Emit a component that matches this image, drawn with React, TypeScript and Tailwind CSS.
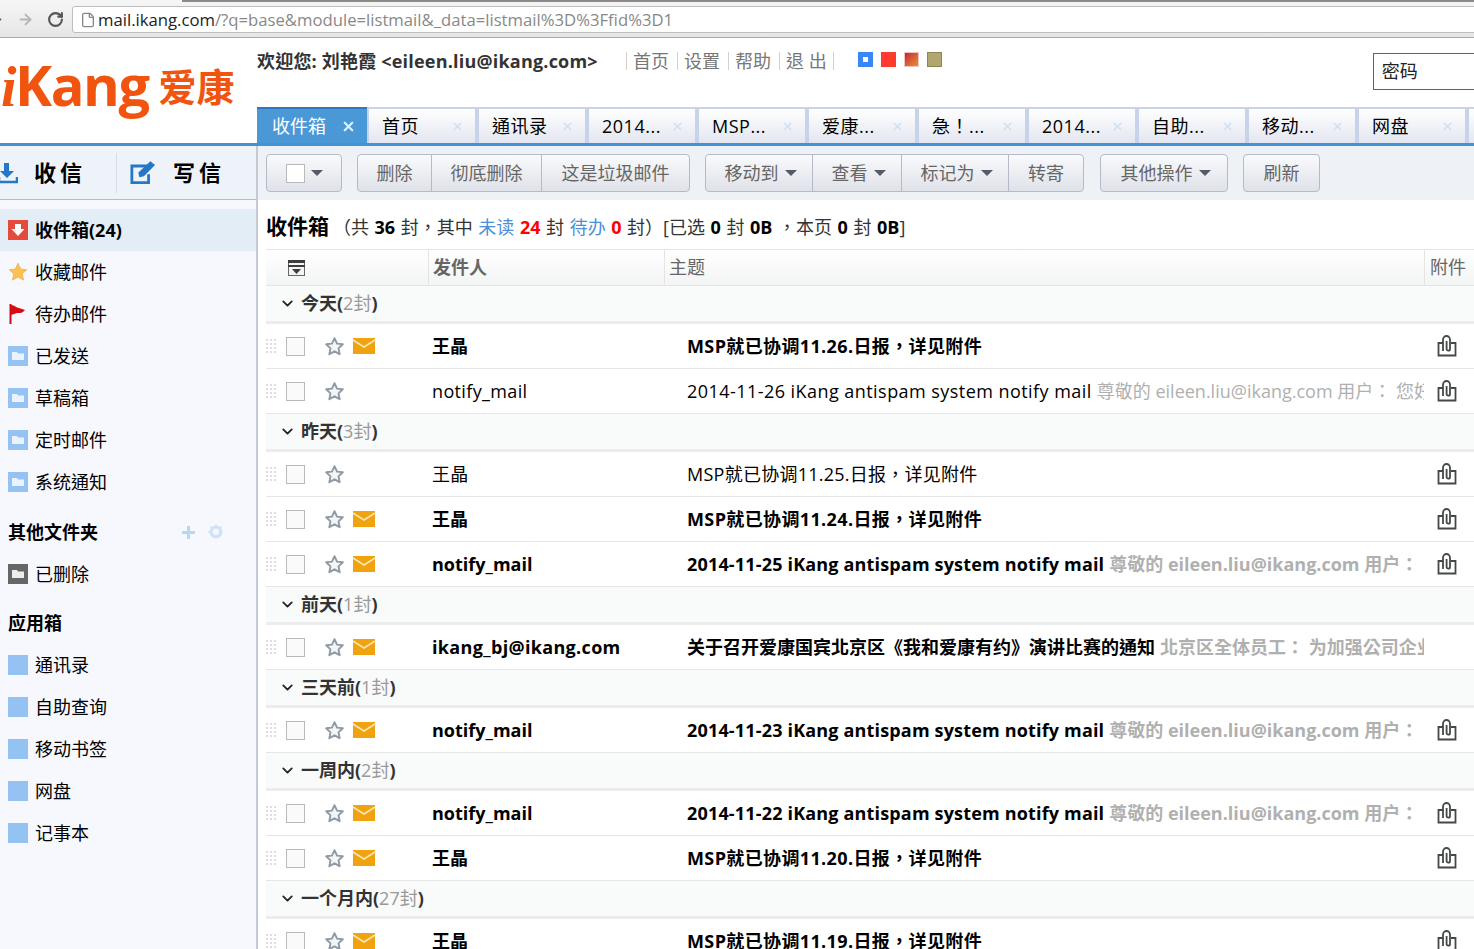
import { ArrowLeft, ArrowRight, ChevronDown, File, RotateCw, X } from "lucide-react";

const tabs = ["首页", "通讯录", "2014...", "MSP...", "爱康...", "急！...", "2014...", "自助...", "移动...", "网盘", ""];

const navLinks = ["首页", "设置", "帮助", "退 出"];
const folders = ["已发送", "草稿箱", "定时邮件", "系统通知"];
const apps = ["通讯录", "自助查询", "移动书签", "网盘", "记事本"];

type Mail = { sender: string; subject: string; track: string; preview?: string; unread?: boolean; noClip?: boolean };
type Group = { label: string; count: string; mails: Mail[] };

const preview = "尊敬的 eileen.liu@ikang.com 用户：";

const groups: Group[] = [
  {
    label: "今天",
    count: "2封",
    mails: [
      { sender: "王晶", subject: "MSP就已协调11.26.日报，详见附件", track: "tracking-[0.37px]", unread: true },
      { sender: "notify_mail", subject: "2014-11-26 iKang antispam system notify mail", track: "tracking-[0.45px]", preview: "尊敬的 eileen.liu@ikang.com 用户： 您好，系统" },
    ],
  },
  {
    label: "昨天",
    count: "3封",
    mails: [
      { sender: "王晶", subject: "MSP就已协调11.25.日报，详见附件", track: "tracking-[0.25px]" },
      { sender: "王晶", subject: "MSP就已协调11.24.日报，详见附件", track: "tracking-[0.37px]", unread: true },
      { sender: "notify_mail", subject: "2014-11-25 iKang antispam system notify mail", track: "tracking-[0.17px]", preview, unread: true },
    ],
  },
  {
    label: "前天",
    count: "1封",
    mails: [
      { sender: "ikang_bj@ikang.com", subject: "关于召开爱康国宾北京区《我和爱康有约》演讲比赛的通知", track: "tracking-normal", preview: "北京区全体员工： 为加强公司企业文化建设", unread: true, noClip: true },
    ],
  },
  {
    label: "三天前",
    count: "1封",
    mails: [{ sender: "notify_mail", subject: "2014-11-23 iKang antispam system notify mail", track: "tracking-[0.17px]", preview, unread: true }],
  },
  {
    label: "一周内",
    count: "2封",
    mails: [
      { sender: "notify_mail", subject: "2014-11-22 iKang antispam system notify mail", track: "tracking-[0.17px]", preview, unread: true },
      { sender: "王晶", subject: "MSP就已协调11.20.日报，详见附件", track: "tracking-[0.37px]", unread: true },
    ],
  },
  {
    label: "一个月内",
    count: "27封",
    mails: [{ sender: "王晶", subject: "MSP就已协调11.19.日报，详见附件", track: "tracking-[0.37px]", unread: true }],
  },
];

function Caret() {
  return <span className="ml-[6px] inline-block h-0 w-0 border-x-[6px] border-t-[6px] border-x-transparent border-t-[#555b66]" />;
}

function ToolButton({ label, width, caret, first, last }: { label: string; width: string; caret?: boolean; first?: boolean; last?: boolean }) {
  return (
    <div
      className={`flex h-[38px] items-center justify-center border border-[#b4bbc7] bg-gradient-to-b from-[#f9fafc] to-[#dfe2e9] text-[18px] text-[#666] ${width} ${first ? "rounded-l-[4px]" : "-ml-px"} ${last ? "rounded-r-[4px]" : ""} ${caret ? "pl-[3px]" : ""}`}
    >
      {label}
      {caret && <Caret />}
    </div>
  );
}

function FolderIcon() {
  return (
    <svg width="20" height="20" viewBox="0 0 20 20" className="shrink-0">
      <rect width="20" height="20" fill="#93c2f3" />
      <path d="M4 6h5l1 1.5h6V14H4z" fill="#e9f3fd" />
    </svg>
  );
}

function SideItem({ label, icon, active }: { label: string; icon: React.ReactNode; active?: boolean }) {
  return (
    <div className={`flex h-[42px] items-center pl-2 text-[18px] text-black ${active ? "bg-[#e3edf6] font-bold" : ""}`}>
      <span className="mr-[7px] flex w-5 shrink-0 justify-center">{icon}</span>
      {label}
    </div>
  );
}

function Star() {
  return (
    <svg width="21" height="21" viewBox="0 0 24 24" fill="#f4f6f8" stroke="#8e9aa5" strokeWidth="2.200" strokeLinejoin="round" className="shrink-0">
      <path d="M12 2.5l2.900 6.200 6.600.8-4.900 4.600 1.300 6.700L12 17.500l-5.900 3.300 1.300-6.700L2.500 9.500l6.600-.8z" />
    </svg>
  );
}

function Envelope() {
  return (
    <svg width="22" height="16" viewBox="0 0 22 16" className="shrink-0">
      <rect width="22" height="16" fill="#f0a30e" />
      <path d="M0 2l11 7 11-7" fill="none" stroke="#fde7b8" strokeWidth="1.500" />
    </svg>
  );
}

function Clip() {
  return (
    <svg width="20" height="22" viewBox="0 0 20 22" fill="none" stroke="#444946" strokeWidth="1.800" className="shrink-0">
      <path d="M6 8H1.500v12.500h17V8H14" />
      <path d="M6 16V4.500a3.500 3.500 0 0 1 7 0V14a1.700 1.700 0 0 1-3.400 0V6" />
    </svg>
  );
}

function DragDots() {
  return (
    <div className="grid w-[10px] shrink-0 grid-cols-3 gap-[2px]">
      {Array.from({ length: 12 }).map((_, i) => (
        <span key={i} className="h-[2px] w-[2px] bg-[#dedede]" />
      ))}
    </div>
  );
}

function MailRow({ mail }: { mail: Mail }) {
  return (
    <div className={`flex h-[45px] items-center border-b border-[#e6e6e6] text-[18px] text-black ${mail.unread ? "font-bold" : ""}`}>
      <DragDots />
      <span className="ml-[10px] h-[19px] w-[19px] shrink-0 border border-[#b9b9b9] bg-[#fafafa]" />
      <span className="ml-[19px] flex w-[21px] shrink-0"><Star /></span>
      <span className="ml-[8px] flex w-[22px] shrink-0">{mail.unread && <Envelope />}</span>
      <span className={`ml-[57px] w-[255px] shrink-0 truncate ${mail.unread ? (mail.noClip ? "tracking-[0.33px]" : "") : "tracking-[0.36px]"}`}>{mail.sender}</span>
      <div className={`w-[737px] shrink-0 overflow-hidden whitespace-nowrap ${mail.track}`}>
        {mail.subject}
        {mail.preview && <span className="ml-[5px] tracking-normal text-[#b0b0b0]">{mail.preview}</span>}
      </div>
      <span className="ml-[13px] flex w-5 shrink-0">{!mail.noClip && <Clip />}</span>
    </div>
  );
}

export default function App() {
  return (
    <div className="h-[949px] w-[1474px] overflow-hidden bg-white font-['Open_Sans','Noto_Sans_CJK_TC',sans-serif]">
      {/* Browser bar */}
      <div className="flex h-[38px] flex-col overflow-hidden border-b border-[#a9a9a9] bg-gradient-to-b from-[#f6f6f6] to-[#e6e6e6]">
        <div className="ml-[182px] h-[2px] shrink-0 bg-[#8a8a8a]" />
        <div className="flex flex-1 items-center">
          <ArrowLeft size={17} className="-ml-[13px] shrink-0 text-[#555]" strokeWidth={2.5} />
          <ArrowRight size={17} className="ml-[13px] shrink-0 text-[#b5b5b5]" strokeWidth={2.5} />
          <RotateCw size={17} className="ml-[13px] shrink-0 text-[#555]" strokeWidth={3} />
          <div className="ml-[8px] flex h-[27px] w-[1450px] shrink-0 items-center rounded-l-[3px] border border-[#bdbdbd] bg-white pl-[7px] text-[16.7px]">
            <File size={16} className="mr-[2px] shrink-0 text-[#888]" />
            <span className="text-[#222]">mail.ikang.com</span>
            <span className="text-[#888]">/?q=base&amp;module=listmail&amp;_data=listmail%3D%3Ffid%3D1</span>
          </div>
        </div>
      </div>

      {/* Header */}
      <div className="flex h-[105px]">
        <div className="flex w-[257px] shrink-0 items-center pb-[10px] pl-px text-[#f1540e]">
          <span className="text-[56px] font-bold leading-none tracking-[-1.5px]"><span className="font-['Liberation_Serif'] italic">i</span>Kang</span>
          <span className="ml-[10px] text-[38px] font-bold leading-none">爱康</span>
        </div>
        <div className="flex min-w-0 flex-1 flex-col">
          <div className="flex flex-1 items-start whitespace-nowrap pt-[10px]">
            <span className="w-[369px] shrink-0 text-[18px] font-bold tracking-[0.2px] text-[#333]">欢迎您: 刘艳霞 &lt;eileen.liu@ikang.com&gt;</span>
            <div className="mt-[4px] flex h-[18px] shrink-0 items-center border-r border-[#d8d0c8] text-[18px] text-[#777]">
              {navLinks.map((link, i) => (
                <span key={link} className={`border-l border-[#d8d0c8] pl-[6px] leading-[18px] ${i === 3 ? "pr-[6px]" : "pr-[8px]"}`}>{link}</span>
              ))}
            </div>
            <div className="ml-[24px] mt-[4px] flex shrink-0 gap-2">
              <span className="h-[15px] w-[15px] border-[5px] border-[#3a86f5] bg-white" />
              <span className="h-[15px] w-[15px] bg-[#ff3b30]" />
              <span className="h-[15px] w-[15px] border border-[#eec4c4] bg-gradient-to-br from-[#c4183c] to-[#e8901c]" />
              <span className="h-[15px] w-[15px] border border-[#8f8550] bg-[#b0a66e]" />
            </div>
            <div className="ml-[431px] mt-[5px] flex h-[37px] w-[140px] shrink-0 items-center border border-[#2a6fb5] pl-2 text-[18px] text-[#222]">密码</div>
          </div>
          <div className="flex h-[36px] shrink-0">
            <div className="flex w-[110px] shrink-0 items-center justify-between border-t-2 border-[#2f77c0] bg-[#4a98d6] pl-[15px] pr-[11px] text-[18px] text-white">
              收件箱
              <X size={15} strokeWidth={3.5} className="text-[#e3f0fa]" />
            </div>
            {tabs.map((tab, i) => (
              <div key={i} className="flex w-[110px] shrink-0 items-center justify-between border-x-2 border-t-2 border-[#c7d3ea] bg-gradient-to-b from-white to-[#e3e6f0] pl-[13px] pr-[11px] text-[18px] tracking-[0.5px] text-black">
                {tab}
                <X size={13} strokeWidth={3} className="text-[#cfe0f2]" />
              </div>
            ))}
          </div>
        </div>
      </div>
      <div className="h-[3px] bg-[#4393d4]" />

      <div className="flex">
        {/* Sidebar */}
        <div className="h-[803px] w-[258px] shrink-0 border-r-2 border-[#c3cad3] bg-[#f6f8fd]">
          <div className="flex h-[54px] items-center border-b border-[#a9bfd6] bg-[#eef3f9]">
            <svg width="18" height="22" viewBox="0 0 18 22" className="shrink-0">
              <path d="M4 1h5v8h5l-7 7-7-7h4z" fill="#2478c6" />
              <path d="M-1 15v5h18v-5" fill="none" stroke="#2478c6" strokeWidth="2.500" />
            </svg>
            <span className="ml-[16px] text-[22px] font-bold tracking-[4px] text-black">收信</span>
            <span className="ml-[30px] h-[40px] w-px bg-[#d8dee6]" />
            <svg width="26" height="25" viewBox="0 0 28 26" className="ml-[13px] shrink-0">
              <path d="M20 6H2v18h18v-9" fill="none" stroke="#2478c6" strokeWidth="3" />
              <path d="M9 13l1 5 5-1L27 5l-5-4z" fill="#2478c6" />
            </svg>
            <span className="ml-[17px] text-[22px] font-bold tracking-[4px] text-black">写信</span>
          </div>
          <div className="pt-[9px]">
            <SideItem
              active
              label="收件箱(24)"
              icon={
                <svg width="20" height="20" viewBox="0 0 20 20">
                  <rect width="20" height="20" fill="#e54b3c" />
                  <path d="M7 4h6v5h3.500L10 16 3.500 9H7z" fill="#fff" />
                </svg>
              }
            />
            <SideItem
              label="收藏邮件"
              icon={
                <svg width="20" height="20" viewBox="0 0 24 24" fill="#fcc24f" stroke="#eeb05a">
                  <path d="M12 1.500l3.200 7 7.300.8-5.400 5 1.500 7.400L12 18l-6.600 3.700 1.500-7.400-5.400-5 7.300-.8z" />
                </svg>
              }
            />
            <SideItem
              label="待办邮件"
              icon={
                <svg width="20" height="20" viewBox="0 0 20 20">
                  <path d="M1.500 0h2v20h-2z" fill="#cc0a14" />
                  <path d="M3 1c4 0 5 3 8 3l6 2c-3 4-6 3-8 3L3 11z" fill="#d80c14" />
                </svg>
              }
            />
            {folders.map((f) => (
              <SideItem key={f} label={f} icon={<FolderIcon />} />
            ))}
          </div>
          <div className="mt-[8px] flex h-[42px] items-center justify-between pl-2 pr-[32px] text-[18px] font-bold text-black">
            其他文件夹
            <div className="flex items-center gap-[13px]">
              <svg width="13" height="13" viewBox="0 0 13 13">
                <path d="M6.500 0v13M0 6.500h13" stroke="#b6d8f7" strokeWidth="3" />
              </svg>
              <svg width="16" height="16" viewBox="0 0 16 16">
                <circle cx="8" cy="8" r="5" fill="none" stroke="#cfe1f7" strokeWidth="3" />
                <path d="M8 0v16M0 8h16M2.500 2.500l11 11M13.500 2.500l-11 11" stroke="#cfe1f7" strokeWidth="1.500" strokeDasharray="2.500 8" />
              </svg>
            </div>
          </div>
          <SideItem
            label="已删除"
            icon={
              <svg width="20" height="20" viewBox="0 0 20 20">
                <rect width="20" height="20" fill="#666" />
                <path d="M4 6h5l1 1.500h6V14H4z" fill="#eee" />
              </svg>
            }
          />
          <div className="mt-[7px] flex h-[42px] items-center pl-2 text-[18px] font-bold text-black">应用箱</div>
          {apps.map((a) => (
            <SideItem key={a} label={a} icon={<span className="h-5 w-5 bg-[#93c2f3]" />} />
          ))}
        </div>

        {/* Main */}
        <div className="min-w-0 flex-1">
          <div className="flex h-[54px] items-center gap-[15px] bg-[#eef2f7] pl-[8px]">
            <div className="flex h-[38px] w-[76px] items-center justify-center rounded-[4px] border border-[#b4bbc7] bg-gradient-to-b from-[#f9fafc] to-[#dfe2e9]">
              <span className="h-[19px] w-[19px] border border-[#b9b9b9] bg-white" />
              <Caret />
            </div>
            <div className="flex">
              <ToolButton first label="删除" width="w-[75px]" />
              <ToolButton label="彻底删除" width="w-[111px]" />
              <ToolButton last label="这是垃圾邮件" width="w-[149px]" />
            </div>
            <div className="mr-px flex">
              <ToolButton first caret label="移动到" width="w-[108px]" />
              <ToolButton caret label="查看" width="w-[90px]" />
              <ToolButton caret label="标记为" width="w-[108px]" />
              <ToolButton last label="转寄" width="w-[76px]" />
            </div>
            <ToolButton first last caret label="其他操作" width="w-[128px]" />
            <ToolButton first last label="刷新" width="w-[77px]" />
          </div>

          <div className="pl-[8px]">
            <div className="flex h-[49px] items-center whitespace-pre pt-[5px] text-[18px] text-[#333]">
              <span className="mr-[4px] text-[21px] font-bold text-black">收件箱</span>
              <span className="[word-spacing:0.9px]">（共 <b className="text-black">36</b> 封，其中 <span className="text-[#4a8fd8]">未读</span> <b className="text-[#f00]">24</b> 封 <span className="text-[#4a8fd8]">待办</span> <b className="text-[#f00]">0</b> 封）[已选 <b className="text-black">0</b> 封 <b className="text-black">0B</b> ，本页 <b className="text-black">0</b> 封 <b className="text-black">0B</b>]</span>
            </div>
            <div className="flex h-[37px] border-y border-[#e4e4e4] bg-gradient-to-b from-white to-[#f3f4f4] text-[18px] text-[#666]">
              <div className="flex w-[163px] shrink-0 items-center border-r border-[#e4e4e4] pl-[22px]">
                <svg width="17" height="16" viewBox="0 0 17 16">
                  <rect x="0.500" y="0.500" width="16" height="15" fill="#f4f4f4" stroke="#666" />
                  <path d="M0 0h17v3H0zM0 5h17v2H0zM4 9h9l-4.500 5z" fill="#3c3c3c" />
                </svg>
              </div>
              <div className="flex w-[236px] shrink-0 items-center border-r border-[#e4e4e4] pl-[4px] font-bold">发件人</div>
              <div className="flex w-[760px] shrink-0 items-center border-r border-[#e4e4e4] pl-[4px]">主题</div>
              <div className="flex items-center pl-[5px]">附件</div>
            </div>
            {groups.map((g) => (
              <div key={g.label}>
                <div className="flex h-[38px] items-center border-b-[3px] border-[#ececec] bg-[#f9fafa] pl-[13px] text-[18px] font-bold text-[#333]">
                  <ChevronDown size={17} strokeWidth={2.5} className="mr-[5px] text-[#222]" />
                  {g.label}(<span className="font-normal text-[#999]">{g.count}</span>)
                </div>
                {g.mails.map((m, i) => (
                  <MailRow key={i} mail={m} />
                ))}
              </div>
            ))}
          </div>
        </div>
      </div>
    </div>
  );
}
